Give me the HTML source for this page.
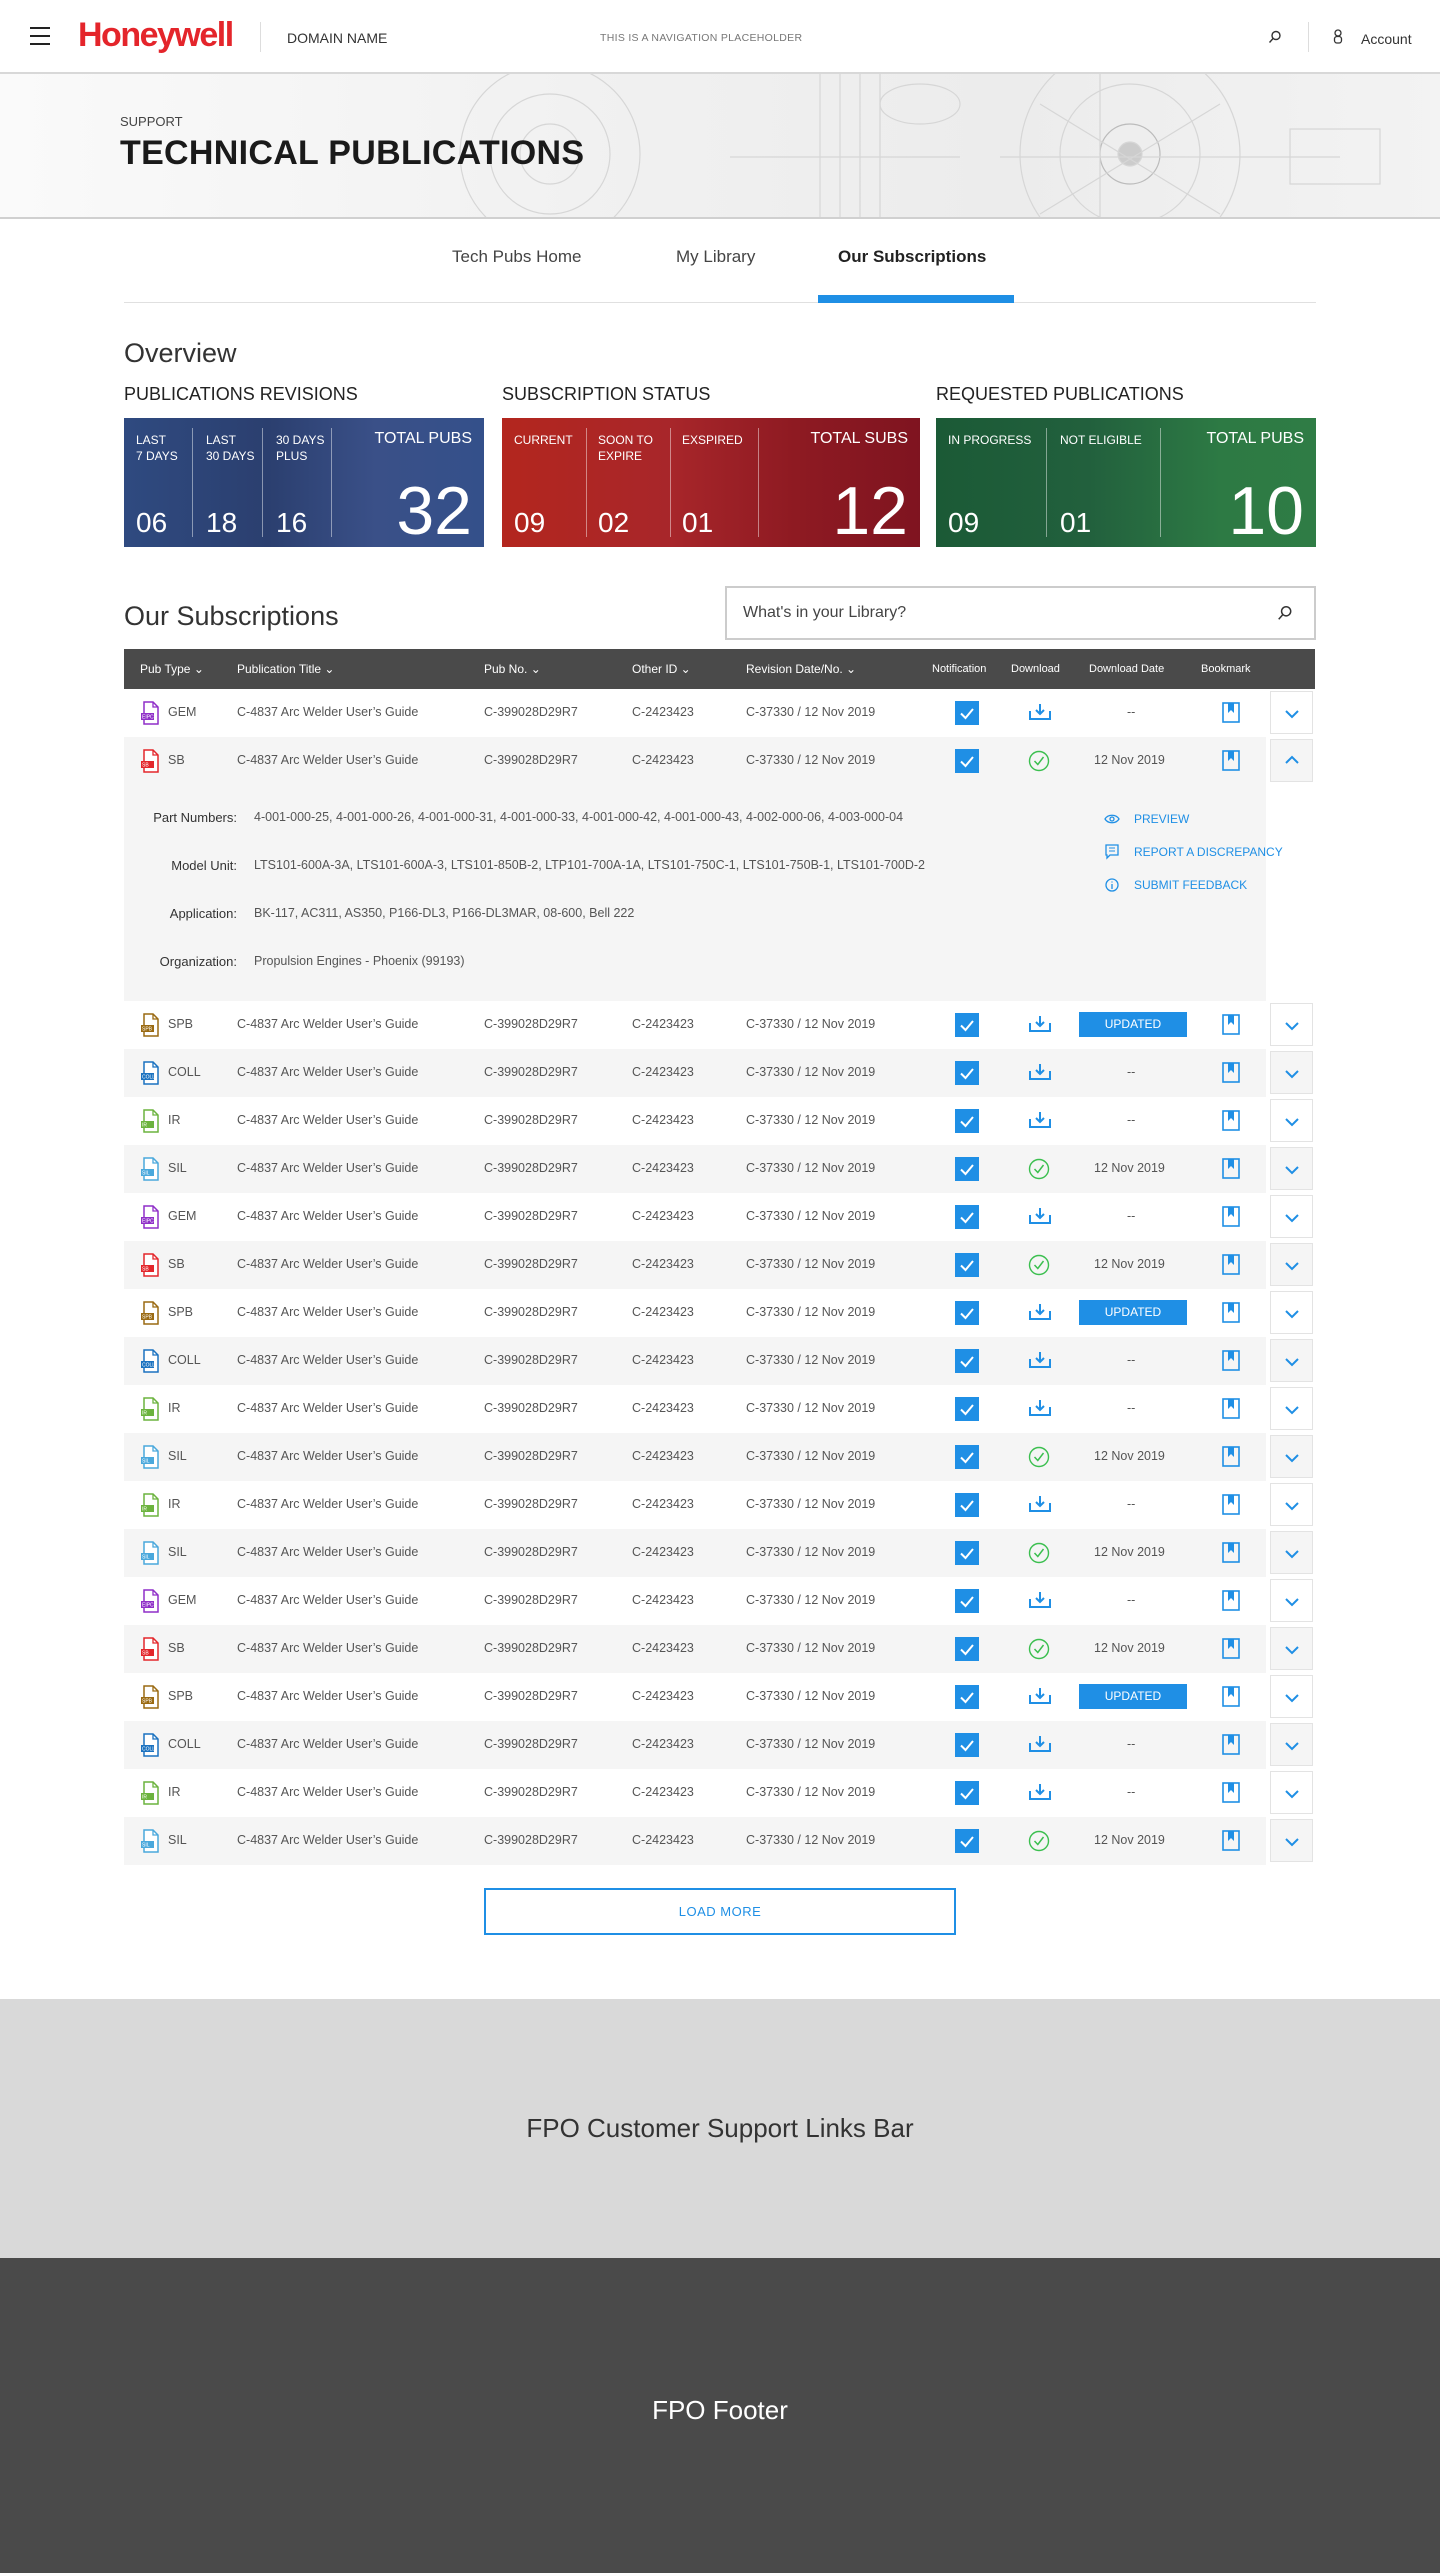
<!DOCTYPE html>
<html><head><meta charset="utf-8"><style>
*{box-sizing:border-box;margin:0;padding:0}
body{width:1440px;height:2573px;font-family:"Liberation Sans",sans-serif;color:#303030;background:#fff;position:relative;overflow:hidden}
.abs{position:absolute}
.hdr{top:0;left:0;width:1440px;height:74px;border-bottom:2px solid #d8d8d8;background:#fff}
.hero{top:74px;left:0;width:1440px;height:145px;background:linear-gradient(90deg,#fafafa 0%,#f1f1f1 40%,#ececec 70%,#f3f3f3 100%);border-bottom:2px solid #d0d0d0;overflow:hidden}
.card{height:129px;top:418px;color:#fff;overflow:hidden}
.card .div{position:absolute;top:10px;bottom:10px;width:1px;background:rgba(255,255,255,.45)}
.card .lb{position:absolute;top:14px;font-size:12px;line-height:16px}
.card .sm{position:absolute;bottom:8px;font-size:28px;font-weight:300}
.card .tl{position:absolute;top:12px;right:12px;font-size:16px}
.card .bg{position:absolute;bottom:2px;right:12px;font-size:68px;font-weight:300;line-height:68px}
.sec{top:384px;font-size:18px;color:#222}
.th{top:649px;left:124px;width:1191px;height:40px;background:#4a4a4a;color:#fff;font-size:12px}
.th span{position:absolute;top:13px;white-space:nowrap}
.row{left:124px;width:1142px;height:48px;font-size:12.5px;color:#555}
.row span{position:absolute;top:16px;white-space:nowrap}
.g{background:#f5f5f5}
.cb{position:absolute;left:831px;top:12px;width:24px;height:24px;background:#1f8fe5}
.exp{position:absolute;left:1146px;top:2px;width:43px;height:43px;border:1px solid #e3e3e3;background:#fff}
.upd{position:absolute;left:955px;top:11px;width:108px;height:25px;background:#1f8fe5;color:#fff;font-size:12px;text-align:center;line-height:25px}
.ic{position:absolute;left:17px;top:12px}
.det{font-size:12.5px;color:#555}
.det div{white-space:nowrap}
.lbl{position:absolute;right:1029px;color:#333;font-size:13px;text-align:right}
.lnk{position:absolute;left:1134px;color:#1f8fe5;font-size:12px}
</style></head><body>

<div class="abs hdr">
 <div class="abs" style="left:30px;top:27px;width:20px;height:2px;background:#222"></div>
 <div class="abs" style="left:30px;top:35px;width:20px;height:2px;background:#222"></div>
 <div class="abs" style="left:30px;top:43px;width:20px;height:2px;background:#222"></div>
 <div class="abs" style="left:78px;top:16px;font-size:34px;font-weight:bold;color:#e4252b;letter-spacing:-1.5px">Honeywell</div>
 <div class="abs" style="left:260px;top:22px;width:1px;height:30px;background:#ddd"></div>
 <div class="abs" style="left:287px;top:30px;font-size:14px;color:#333">DOMAIN NAME</div>
 <div class="abs" style="left:600px;top:32px;font-size:10.5px;color:#777;letter-spacing:.3px">THIS IS A NAVIGATION PLACEHOLDER</div>
 <svg class="abs" style="left:1268px;top:30px" width="14" height="14" viewBox="0 0 14 14"><circle cx="8" cy="5.5" r="4" fill="none" stroke="#333" stroke-width="1.4"/><path d="M5 8.5L1.5 12.5" stroke="#333" stroke-width="1.4"/></svg>
 <div class="abs" style="left:1308px;top:22px;width:1px;height:30px;background:#ddd"></div>
 <svg class="abs" style="left:1333px;top:29px" width="10" height="15" viewBox="0 0 10 15"><circle cx="5" cy="4" r="3" fill="none" stroke="#333" stroke-width="1.3"/><rect x="1.5" y="7.5" width="7" height="6.5" rx="2.5" fill="none" stroke="#333" stroke-width="1.3"/></svg>
 <div class="abs" style="left:1361px;top:31px;font-size:14px;color:#333">Account</div>
</div>

<div class="abs hero">
 <svg class="abs" style="left:400px;top:0" width="1040" height="145" viewBox="0 0 1040 145" fill="none" stroke="#d6d6d6" stroke-width="1.2">
  <circle cx="150" cy="80" r="90"/><circle cx="150" cy="80" r="60"/><circle cx="150" cy="80" r="30"/>
  <circle cx="730" cy="80" r="110"/><circle cx="730" cy="80" r="70"/><circle cx="730" cy="80" r="30" stroke="#bbb"/><circle cx="730" cy="80" r="12" fill="#ccc"/>
  <path d="M330 83H560M600 83H940M700 -10V160M640 30L820 140M820 30L640 140"/>
  <rect x="890" y="55" width="90" height="55"/><path d="M420 0V145M440 0V145M460 0V145M480 0V145"/>
  <ellipse cx="520" cy="30" rx="40" ry="20"/>
 </svg>
 <div class="abs" style="left:120px;top:40px;font-size:13px;color:#444">SUPPORT</div>
 <div class="abs" style="left:120px;top:60px;font-size:34px;font-weight:bold;color:#1a1a1a;letter-spacing:.3px">TECHNICAL PUBLICATIONS</div>
</div>

<div class="abs" style="left:452px;top:247px;font-size:17px;color:#444">Tech Pubs Home</div>
<div class="abs" style="left:676px;top:247px;font-size:17px;color:#444">My Library</div>
<div class="abs" style="left:838px;top:247px;font-size:17px;font-weight:bold;color:#222">Our Subscriptions</div>
<div class="abs" style="left:124px;top:302px;width:1192px;height:1px;background:#e0e0e0"></div>
<div class="abs" style="left:818px;top:295px;width:196px;height:8px;background:#1f8fe5"></div>

<div class="abs" style="left:124px;top:338px;font-size:27px;font-weight:300;color:#333">Overview</div>
<div class="abs sec" style="left:124px">PUBLICATIONS REVISIONS</div>
<div class="abs sec" style="left:502px">SUBSCRIPTION STATUS</div>
<div class="abs sec" style="left:936px">REQUESTED PUBLICATIONS</div>

<div class="abs card" style="left:124px;width:360px;background:linear-gradient(90deg,#2f4a80,#2b3f6f 40%,#3a5088 70%,#34508a)">
 <div class="div" style="left:68px"></div><div class="div" style="left:138px"></div><div class="div" style="left:207px"></div>
 <div class="lb" style="left:12px">LAST<br>7 DAYS</div><div class="lb" style="left:82px">LAST<br>30 DAYS</div><div class="lb" style="left:152px">30 DAYS<br>PLUS</div>
 <div class="sm" style="left:12px">06</div><div class="sm" style="left:82px">18</div><div class="sm" style="left:152px">16</div>
 <div class="tl">TOTAL PUBS</div><div class="bg">32</div>
</div>
<div class="abs card" style="left:502px;width:418px;background:linear-gradient(90deg,#b3261e,#a8262a 40%,#8e1a22 70%,#7f1420)">
 <div class="div" style="left:84px"></div><div class="div" style="left:168px"></div><div class="div" style="left:256px"></div>
 <div class="lb" style="left:12px">CURRENT</div><div class="lb" style="left:96px">SOON TO<br>EXPIRE</div><div class="lb" style="left:180px">EXSPIRED</div>
 <div class="sm" style="left:12px">09</div><div class="sm" style="left:96px">02</div><div class="sm" style="left:180px">01</div>
 <div class="tl">TOTAL SUBS</div><div class="bg">12</div>
</div>
<div class="abs card" style="left:936px;width:380px;background:linear-gradient(90deg,#1b5a36,#22603d 40%,#2d7a44 75%,#2f7c45)">
 <div class="div" style="left:110px"></div><div class="div" style="left:224px"></div>
 <div class="lb" style="left:12px">IN PROGRESS</div><div class="lb" style="left:124px">NOT ELIGIBLE</div>
 <div class="sm" style="left:12px">09</div><div class="sm" style="left:124px">01</div>
 <div class="tl">TOTAL PUBS</div><div class="bg">10</div>
</div>

<div class="abs" style="left:124px;top:601px;font-size:27px;font-weight:300;color:#333">Our Subscriptions</div>
<div class="abs" style="left:725px;top:586px;width:591px;height:54px;border:2px solid #ccc;background:#fff">
 <div class="abs" style="left:16px;top:16px;font-size:16px;color:#444">What's in your Library?</div>
 <svg class="abs" style="left:550px;top:17px" width="16" height="16" viewBox="0 0 14 14"><circle cx="8" cy="5.5" r="4" fill="none" stroke="#333" stroke-width="1.3"/><path d="M5 8.5L1.5 12.5" stroke="#333" stroke-width="1.3"/></svg>
</div>

<div class="abs th">
 <span style="left:16px">Pub Type &#8964;</span><span style="left:113px">Publication Title &#8964;</span><span style="left:360px">Pub No. &#8964;</span><span style="left:508px">Other ID &#8964;</span><span style="left:622px">Revision Date/No. &#8964;</span>
 <span style="left:808px;font-size:11px;top:14px">Notification</span><span style="left:887px;font-size:11px;top:14px">Download</span><span style="left:965px;font-size:11px;top:14px">Download Date</span><span style="left:1077px;font-size:11px;top:14px">Bookmark</span>
</div>

<div class="abs det" style="left:124px;top:785px;width:1142px;height:216px;background:#f5f5f5">
 <div class="lbl" style="top:25px">Part Numbers:</div><div class="abs" style="left:130px;top:25px">4-001-000-25, 4-001-000-26, 4-001-000-31, 4-001-000-33, 4-001-000-42, 4-001-000-43, 4-002-000-06, 4-003-000-04</div>
 <div class="lbl" style="top:73px">Model Unit:</div><div class="abs" style="left:130px;top:73px">LTS101-600A-3A, LTS101-600A-3, LTS101-850B-2, LTP101-700A-1A, LTS101-750C-1, LTS101-750B-1, LTS101-700D-2</div>
 <div class="lbl" style="top:121px">Application:</div><div class="abs" style="left:130px;top:121px">BK-117, AC311, AS350, P166-DL3, P166-DL3MAR, 08-600, Bell 222</div>
 <div class="lbl" style="top:169px">Organization:</div><div class="abs" style="left:130px;top:169px">Propulsion Engines - Phoenix (99193)</div>
</div>
<svg class="abs" style="left:1104px;top:813px" width="16" height="12" viewBox="0 0 16 12"><path d="M1 6C4 1 12 1 15 6C12 11 4 11 1 6Z" fill="none" stroke="#1f8fe5" stroke-width="1.3"/><circle cx="8" cy="6" r="2" fill="none" stroke="#1f8fe5" stroke-width="1.3"/></svg>
<div class="lnk" style="top:812px">PREVIEW</div>
<svg class="abs" style="left:1105px;top:844px" width="14" height="16" viewBox="0 0 14 16"><path d="M1 1H13V11H5L2 14V11H1Z" fill="none" stroke="#1f8fe5" stroke-width="1.3"/><path d="M4 4H10M4 7H10" stroke="#1f8fe5"/></svg>
<div class="lnk" style="top:845px">REPORT A DISCREPANCY</div>
<svg class="abs" style="left:1105px;top:877px" width="14" height="16" viewBox="0 0 14 16"><circle cx="7" cy="8" r="6" fill="none" stroke="#1f8fe5" stroke-width="1.3"/><path d="M7 7V12M7 4.5V5.5" stroke="#1f8fe5" stroke-width="1.3"/></svg>
<div class="lnk" style="top:878px">SUBMIT FEEDBACK</div>

<div id="rows"></div>

<div class="abs" style="left:484px;top:1888px;width:472px;height:47px;border:2px solid #1f8fe5;color:#1f8fe5;font-size:13px;text-align:center;line-height:43px;letter-spacing:.5px">LOAD MORE</div>

<div class="abs" style="left:0;top:1999px;width:1440px;height:259px;background:#d9d9d9">
 <div style="text-align:center;margin-top:114px;font-size:26px;font-weight:300;color:#333">FPO Customer Support Links Bar</div>
</div>
<div class="abs" style="left:0;top:2258px;width:1440px;height:315px;background:#4a4a4a">
 <div style="text-align:center;margin-top:137px;font-size:26px;font-weight:300;color:#fff">FPO Footer</div>
</div>

<script>
var C={GEM:'#8f2fc8',SB:'#e3262b',SPB:'#9a6a12',COLL:'#1b72c0',IR:'#6cb33e',SIL:'#4aa8dc'};
var L={GEM:'EIPC',SB:'SB',SPB:'SPB',COLL:'COLL',IR:'IR',SIL:'SIL'};
var rows=[['GEM','n',0],['SB','c',1],['SPB','u',0],['COLL','n',1],['IR','n',0],['SIL','c',1],['GEM','n',0],['SB','c',1],['SPB','u',0],['COLL','n',1],['IR','n',0],['SIL','c',1],['IR','n',0],['SIL','c',1],['GEM','n',0],['SB','c',1],['SPB','u',0],['COLL','n',1],['IR','n',0],['SIL','c',1]];
var h='',y=689;
rows.forEach(function(r,i){
 var t=r[0],c=C[t];
 var icon='<svg class="ic" width="20" height="24" viewBox="0 0 20 24"><path d="M3 1H12L17 6V23H3Z" fill="#fff" stroke="'+c+'" stroke-width="1.5"/><path d="M12 1V6H17" fill="none" stroke="'+c+'" stroke-width="1.3"/><rect x="0" y="12" width="13" height="7" fill="'+c+'"/><text x="1" y="17.7" font-size="5" fill="#fff" font-family="Liberation Sans">'+L[t]+'</text></svg>';
 var dl;
 if(r[1]=='c') dl='<svg style="position:absolute;left:904px;top:13px" width="22" height="22" viewBox="0 0 22 22"><circle cx="11" cy="11" r="9.5" fill="none" stroke="#3bbf4f" stroke-width="1.4"/><path d="M6.5 11L9.8 14.5L15.5 7" fill="none" stroke="#3bbf4f" stroke-width="1.5"/></svg><span style="left:970px">12 Nov 2019</span>';
 else dl='<svg style="position:absolute;left:905px;top:14px" width="22" height="18" viewBox="0 0 22 18"><path d="M1 8V16H21V8" fill="none" stroke="#1f8fe5" stroke-width="2"/><path d="M11 1V11M7 7L11 11L15 7" fill="none" stroke="#1f8fe5" stroke-width="2"/></svg>'+(r[1]=='u'?'<div class="upd">UPDATED</div>':'<span style="left:1003px">--</span>');
 var expBg=r[2]?'#f5f5f5':'#fff';
 var chev=(i==1)?'M6 12L12 6L18 12':'M6 8L12 14L18 8';
 h+='<div class="abs row'+(r[2]?' g':'')+'" style="top:'+y+'px">'+icon+'<span style="left:44px">'+t+'</span><span style="left:113px">C-4837 Arc Welder User\u2019s Guide</span><span style="left:360px">C-399028D29R7</span><span style="left:508px">C-2423423</span><span style="left:622px">C-37330 / 12 Nov 2019</span><div class="cb"><svg width="24" height="24" viewBox="0 0 24 24"><path d="M6 12.5L10.5 17L18 8" fill="none" stroke="#fff" stroke-width="2"/></svg></div>'+dl+'<svg style="position:absolute;left:1098px;top:13px" width="18" height="21" viewBox="0 0 18 21"><rect x="1" y="1" width="16" height="19" fill="none" stroke="#1f8fe5" stroke-width="1.6"/><path d="M6 1V11L9 8L12 11V1Z" fill="#1f8fe5"/></svg><div class="exp" style="background:'+expBg+'"><svg style="position:absolute;left:9px;top:9px" width="24" height="24" viewBox="0 0 24 20"><path d="'+chev+'" fill="none" stroke="#1f8fe5" stroke-width="2"/></svg></div></div>';
 y+=48; if(i==1) y=1001;
});
document.getElementById('rows').innerHTML=h;
</script>
</body></html>
